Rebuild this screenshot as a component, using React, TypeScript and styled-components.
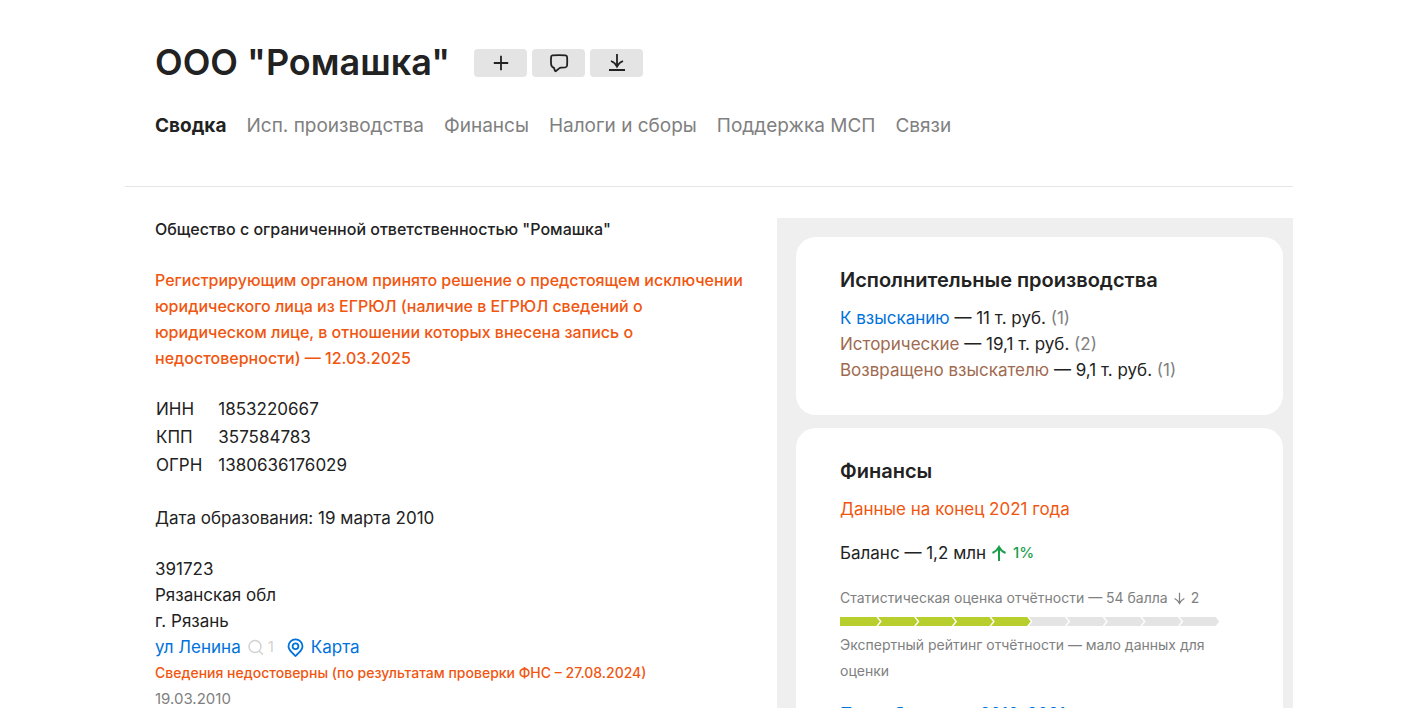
import React from "react";
import styled, { createGlobalStyle } from "styled-components";

const colors = {
  text: "#222222",
  muted: "#808080",
  orange: "#f0560f",
  blue: "#0072db",
  brown: "#a06a50",
  green: "#1a9e4b",
  lime: "#b7ce2c",
  grey: "#e4e4e4",
  panel: "#efefef",
};

const GlobalStyle = createGlobalStyle`
  * { box-sizing: border-box; }
  body {
    margin: 0;
    background: #fff;
    color: ${colors.text};
    font-family: Inter, "Liberation Sans", sans-serif;
    font-size: 17px;
    line-height: 26px;
  }
`;

const Viewport = styled.div`
  height: calc(100vh - 18px);
  overflow: hidden;
`;

const Page = styled.div`
  max-width: 1168px;
  margin: 0 auto;
`;

const Header = styled.header`
  padding: 38px 30px 47px;
  border-bottom: 1px solid ${colors.grey};
`;

const TitleRow = styled.div`
  display: flex;
  align-items: center;
  gap: 24px;
`;

const Title = styled.h1`
  margin: 0;
  font-size: 36px;
  line-height: 48px;
  font-weight: 600;
`;

const Actions = styled.div`
  display: flex;
  gap: 5px;
  padding-top: 2px;
`;

const ActionButton = styled.button`
  display: flex;
  align-items: center;
  justify-content: center;
  width: 53px;
  height: 28px;
  padding: 0;
  border: 0;
  border-radius: 4px;
  background: ${colors.grey};
  color: ${colors.text};
`;

const Tabs = styled.nav`
  display: flex;
  gap: 20px;
  margin-top: 27px;
`;

const Tab = styled.a<{ $active?: boolean }>`
  color: ${(p) => (p.$active ? colors.text : colors.muted)};
  font-size: 19px;
  font-weight: ${(p) => (p.$active ? 700 : 400)};
  text-decoration: none;
`;

const Columns = styled.div`
  display: flex;
  align-items: flex-start;
`;

const Main = styled.main`
  flex: 1;
  min-width: 0;
  padding: 29px 20px 0 30px;
`;

const FullName = styled.p`
  margin: 0 0 25px;
  font-size: 16px;
  font-weight: 500;
`;

const Warning = styled.p`
  margin: 0 0 24px;
  color: ${colors.orange};
  font-size: 16px;
  font-weight: 500;
`;

const Founded = styled.p`
  margin: 0 0 25px;
`;

const Codes = styled.table`
  margin: 0 0 26px;
  border-collapse: collapse;
  line-height: 28px;
  th, td { padding: 0 15px 0 1px; font-weight: 400; text-align: left; }
`;

const Address = styled.address`
  font-style: normal;
`;

const StreetRow = styled.div`
  display: flex;
  align-items: center;
`;

const Link = styled.a<{ $brown?: boolean }>`
  color: ${(p) => (p.$brown ? colors.brown : colors.blue)};
  text-decoration: none;
`;

const MapLink = styled(Link)`
  display: flex;
  align-items: center;
  gap: 7px;
  margin-left: 13px;
`;

const SearchCount = styled.span`
  display: flex;
  align-items: center;
  gap: 4px;
  margin-left: 7px;
  color: #d2d2d2;
  font-size: 15px;
`;

const Unreliable = styled.div`
  color: ${colors.orange};
  font-size: 14px;
  font-weight: 500;
`;

const RecordDate = styled.div`
  color: ${colors.muted};
  font-size: 15px;
`;

const Side = styled.aside`
  display: flex;
  flex-direction: column;
  gap: 13px;
  flex: 0 0 516px;
  margin-top: 31px;
  padding: 19px 10px 19px 19px;
  background: ${colors.panel};
`;

const Card = styled.section`
  padding: 30px 44px 32px;
  border-radius: 20px;
  background: #fff;
`;

const CardTitle = styled.h2`
  margin: 0 0 12px;
  font-size: 20px;
  line-height: 26px;
  font-weight: 600;
`;

const Count = styled.span`
  color: ${colors.muted};
`;

const DataDate = styled.div`
  color: ${colors.orange};
`;

const Row = styled.div`
  display: flex;
  align-items: center;
  gap: 5px;
`;

const Balance = styled(Row)`
  margin-top: 18px;
`;

const Growth = styled.span`
  display: flex;
  align-items: center;
  gap: 6px;
  color: ${colors.green};
  font-size: 15px;
  font-weight: 500;
`;

const Score = styled(Row)`
  margin-top: 19px;
  color: ${colors.muted};
  font-size: 14px;
`;

const Scale = styled.svg`
  display: block;
  margin: 6px 0;
`;

const Note = styled.p`
  margin: 0 0 17px;
  color: ${colors.muted};
  font-size: 14px;
`;

const PlusIcon = () => (
  <svg width="16" height="16" viewBox="0 0 16 16" fill="none" stroke="currentColor" strokeWidth="1.8" aria-hidden>
    <path d="M8 .8v14.400M.8 8h14.400" />
  </svg>
);

const CommentIcon = () => (
  <svg width="20" height="20" viewBox="0 0 20 20" fill="none" stroke="currentColor" strokeWidth="1.8" strokeLinejoin="round" aria-hidden>
    <path d="M3.500 2.300Q10 1.900 16.500 2.300Q18 2.500 18.100 4Q18.400 8.500 18.100 12.500Q17.900 14.200 16.300 14.400L12 14.700Q11 14.800 10.200 15.400L7 18Q6.200 18.600 5.900 17.600L5 14.900Q2.300 14 2.100 11Q1.800 8 2.100 4Q2.200 2.500 3.500 2.300z" />
  </svg>
);

const DownloadIcon = () => (
  <svg width="18" height="18" viewBox="0 0 18 18" fill="none" stroke="currentColor" strokeWidth="1.8" aria-hidden>
    <path d="M9 0v12.500M3 7q4 1.500 6 5.500Q11 8.500 15 7M1 16h16" />
  </svg>
);

const SearchIcon = () => (
  <svg width="16" height="16" viewBox="0 0 16 16" fill="none" stroke="currentColor" strokeWidth="1.500" aria-hidden>
    <circle cx="7" cy="7.500" r="6" />
    <path d="M11 12l4 3.500" />
  </svg>
);

const PinIcon = () => (
  <svg width="17" height="19" viewBox="0 0 17 19" fill="none" stroke="currentColor" strokeWidth="1.800" aria-hidden>
    <path d="M8.500 1.300a7 7 0 0 0-7 6.900c0 3.900 3.200 5.800 5.600 8.500.7.800 1.300 1.300 1.400 1.300s.7-.5 1.400-1.300c2.400-2.700 5.600-4.600 5.600-8.500a7 7 0 0 0-7-6.900z" />
    <circle cx="8.500" cy="8.200" r="2.900" />
  </svg>
);

const ArrowIcon = ({ down, size }: { down?: boolean; size: number }) => (
  <svg width={size} height={size} viewBox="0 0 16 16" fill="none" stroke="currentColor" strokeWidth={down ? 1.5 : 2} aria-hidden>
    <path d={down ? "M8 1v13M2 8q4 2 6 6 2-4 6-6" : "M8 16V2M1.500 8q4.500-2 6.500-6 2 4 6.500 6"} />
  </svg>
);

const STEP = 37.7;

const ScoreScale = () => (
  <Scale width="380" height="9" viewBox="0 0 380 9" role="img" aria-label="54 балла из 100">
    {Array.from({ length: 10 }, (_, i) => {
      const start = i * STEP;
      const end = start + STEP;
      const left = i === 0 ? "M0 9V0" : `M${start + 0.4} 9L${start + 4} 4.500L${start + 0.4} 0`;
      return (
        <path
          key={i}
          d={`${left}H${end - 1.4}L${end + 2.2} 4.500L${end - 1.4} 9Z`}
          fill={i < 5 ? colors.lime : colors.grey}
        />
      );
    })}
  </Scale>
);

const tabs = ["Сводка", "Исп. производства", "Финансы", "Налоги и сборы", "Поддержка МСП", "Связи"];

const codes = [
  ["ИНН", "1853220667"],
  ["КПП", "357584783"],
  ["ОГРН", "1380636176029"],
];

const debts = [
  { name: "К взысканию", sum: "11 т. руб.", count: 1, brown: false },
  { name: "Исторические", sum: "19,1 т. руб.", count: 2, brown: true },
  { name: "Возвращено взыскателю", sum: "9,1 т. руб.", count: 1, brown: true },
];

export default function App() {
  return (
    <Viewport>
      <GlobalStyle />
      <Page>
        <Header>
          <TitleRow>
            <Title>ООО "Ромашка"</Title>
            <Actions>
              <ActionButton aria-label="Добавить"><PlusIcon /></ActionButton>
              <ActionButton aria-label="Комментарий"><CommentIcon /></ActionButton>
              <ActionButton aria-label="Скачать"><DownloadIcon /></ActionButton>
            </Actions>
          </TitleRow>
          <Tabs>
            {tabs.map((t, i) => (
              <Tab key={t} href="#" $active={i === 0}>{t}</Tab>
            ))}
          </Tabs>
        </Header>
        <Columns>
          <Main>
            <FullName>Общество с ограниченной ответственностью "Ромашка"</FullName>
            <Warning>
              Регистрирующим органом принято решение о предстоящем исключении
              юридического лица из ЕГРЮЛ (наличие в ЕГРЮЛ сведений о<br />
              юридическом лице, в отношении которых внесена запись о<br />
              недостоверности) — 12.03.2025
            </Warning>
            <Codes>
              <tbody>
                {codes.map(([name, value]) => (
                  <tr key={name}>
                    <th scope="row">{name}</th>
                    <td>{value}</td>
                  </tr>
                ))}
              </tbody>
            </Codes>
            <Founded>Дата образования: 19 марта 2010</Founded>
            <Address>
              <div>391723</div>
              <div>Рязанская обл</div>
              <div>г. Рязань</div>
              <StreetRow>
                <Link href="#">ул Ленина</Link>
                <SearchCount><SearchIcon />1</SearchCount>
                <MapLink href="#"><PinIcon />Карта</MapLink>
              </StreetRow>
              <Unreliable>Сведения недостоверны (по результатам проверки ФНС – 27.08.2024)</Unreliable>
              <RecordDate>19.03.2010</RecordDate>
            </Address>
          </Main>
          <Side>
            <Card>
              <CardTitle>Исполнительные производства</CardTitle>
              {debts.map((d) => (
                <div key={d.name}>
                  <Link href="#" $brown={d.brown}>{d.name}</Link> — {d.sum} <Count>({d.count})</Count>
                </div>
              ))}
            </Card>
            <Card>
              <CardTitle>Финансы</CardTitle>
              <DataDate>Данные на конец 2021 года</DataDate>
              <Balance>
                Баланс — 1,2 млн
                <Growth><ArrowIcon size={16} />1%</Growth>
              </Balance>
              <Score>
                Статистическая оценка отчётности — 54 балла
                <ArrowIcon down size={13} />
                2
              </Score>
              <ScoreScale />
              <Note>Экспертный рейтинг отчётности — мало данных для оценки</Note>
              <Link href="#">Подробности за 2010–2021</Link>
            </Card>
          </Side>
        </Columns>
      </Page>
    </Viewport>
  );
}
